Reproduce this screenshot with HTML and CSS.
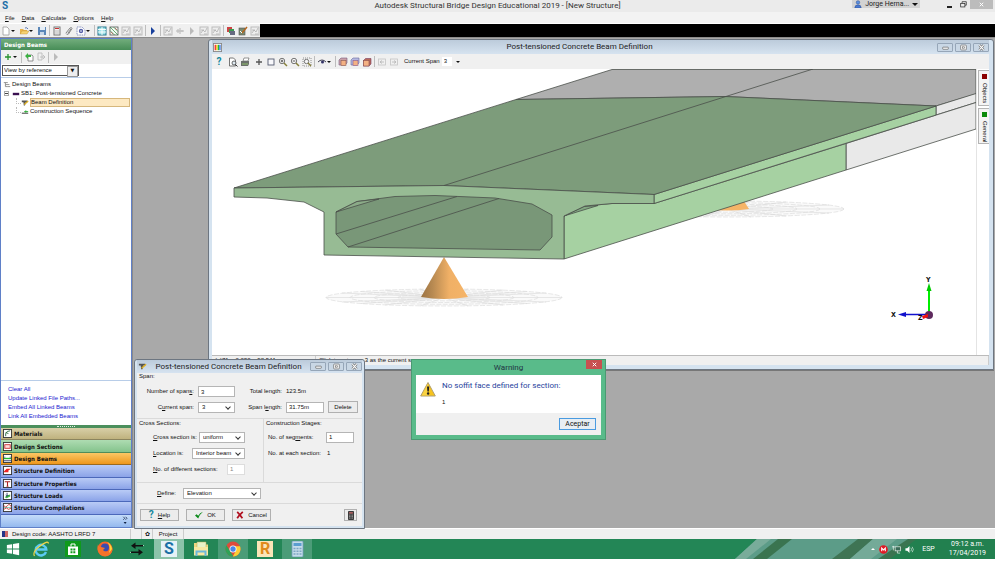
FILE: index.html
```html
<!DOCTYPE html>
<html lang="en">
<head>
<meta charset="utf-8">
<title>Autodesk Structural Bridge Design Educational 2019</title>
<link rel="stylesheet" href="styles.css">
</head>
<body>
<svg class="defs" aria-hidden="true">
  <defs>
    <linearGradient id="cone" x1="0" x2="1"><stop offset="0" stop-color="#9c7444"/><stop offset=".25" stop-color="#b88a52"/><stop offset=".6" stop-color="#f0b066"/><stop offset="1" stop-color="#f5b468"/></linearGradient>
    <symbol id="i-new" viewBox="0 0 10 10"><path d="M2 1h4l2 2v6H2z" fill="#fff" stroke="#999" stroke-width=".8"/></symbol>
    <symbol id="i-open" viewBox="0 0 10 10"><path d="M1 3h3l1 1h3v4H1z" fill="#e8b44a"/><path d="M1 8l2-3h7L8 8z" fill="#f7d372" stroke="#b58a30" stroke-width=".4"/><path d="M6 2q2-1 3 1" fill="none" stroke="#5a7ab8"/></symbol>
    <symbol id="i-save" viewBox="0 0 10 10"><rect x="1" y="1" width="8" height="8" fill="#5b87b8"/><rect x="3" y="1" width="5" height="3" fill="#e4edf6"/><rect x="3" y="6" width="4" height="3" fill="#c9d8e8"/></symbol>
    <symbol id="i-report" viewBox="0 0 10 10"><rect x="2" y="1" width="6" height="8" fill="#f3f3f3" stroke="#777"/><rect x="3" y="2" width="4" height="1" fill="#c33"/><path d="M3 5h4M3 7h4" stroke="#999" stroke-width=".6"/></symbol>
    <symbol id="i-clip" viewBox="0 0 10 10"><path d="M2 7l4-5q2-1 2 .5L4.500 8Q2.500 9 2 7.500M4 7l3-4" fill="none" stroke="#777" stroke-width=".9"/></symbol>
    <symbol id="i-gear" viewBox="0 0 10 10"><path d="M1 1h5l3 3v5H1z" fill="#fff" stroke="#8a94c0" stroke-dasharray="1.5 .8"/><circle cx="5" cy="5" r="2.200" fill="#5560a8"/><circle cx="5" cy="5" r=".8" fill="#fff"/></symbol>
    <symbol id="i-table" viewBox="0 0 10 10"><rect x="1" y="1" width="8" height="8" fill="#9fe4ea" stroke="#28798f"/><path d="M5 1v8M1 3.500h8M1 6h8" stroke="#fff" stroke-width=".9"/></symbol>
    <symbol id="i-hatch" viewBox="0 0 10 10"><rect x="1" y="1" width="8" height="8" fill="#f2faf2" stroke="#555" stroke-width=".8"/><path d="M1 1l8 8M4.500 1L9 5.500M1 4.500L5.500 9" stroke="#2c8a44" stroke-width=".7"/><path d="M6 2l2 2M2 6l2 2" stroke="#b33" stroke-width=".6"/></symbol>
    <symbol id="i-grey" viewBox="0 0 10 10"><rect x="1" y="1" width="8" height="8" fill="#eee" stroke="#bbb"/><path d="M2 7l2-3 2 2 2-4M2 4h3M5 8h3" fill="none" stroke="#b0b0b0" stroke-width=".8"/></symbol>
    <symbol id="i-bars" viewBox="0 0 10 10"><path d="M1 5h8M3 3v4M5 2v6M7 4v2" stroke="#b8b8b8" stroke-width="1"/></symbol>
    <symbol id="i-play" viewBox="0 0 10 10"><path d="M3 1l4 4-4 4z" fill="currentColor"/></symbol>
    <symbol id="i-layers" viewBox="0 0 10 10"><rect x="1" y="1" width="5" height="5" fill="#c44"/><rect x="3" y="3" width="5" height="4" fill="#3a9a50"/><rect x="4" y="5" width="5" height="4" fill="#666a80"/></symbol>
    <symbol id="i-edit" viewBox="0 0 10 10"><rect x="1" y="2" width="6" height="7" fill="#7a8a70" stroke="#555" stroke-width=".6"/><path d="M4 7l5-6" stroke="#b5651d" stroke-width="1.400"/><path d="M2 5l2 2" stroke="#fff"/></symbol>
    <symbol id="i-plus" viewBox="0 0 10 10"><path d="M5 2v6M2 5h6" stroke="currentColor" stroke-width="1.300"/></symbol>
    <symbol id="i-import" viewBox="0 0 10 10"><path d="M4 3h4l1 1v5H4z" fill="#fff" stroke="#777" stroke-width=".8"/><path d="M1 4l3-3v2h3v2H4v2z" fill="#3cb043"/></symbol>
    <symbol id="i-export" viewBox="0 0 10 10"><path d="M2 1h4v7H2zM4 5h5M7 3l2 2-2 2" fill="none" stroke="#bbb" stroke-width=".9"/></symbol>
    <symbol id="i-preview" viewBox="0 0 10 10"><path d="M1.500 1h4l2 2v6h-6z" fill="#fff" stroke="#555" stroke-width=".8"/><circle cx="6" cy="6" r="2" fill="#dfeaf2" stroke="#444" stroke-width=".8"/><path d="M7.500 7.500l2 2" stroke="#333"/></symbol>
    <symbol id="i-print" viewBox="0 0 10 10"><path d="M3 4l1-3h5L8 4z" fill="#fff" stroke="#555" stroke-width=".6"/><path d="M1 4h8v3l-1 2H1z" fill="#6b6f6b"/><path d="M2 7h6" stroke="#8fbf6a"/></symbol>
    <symbol id="i-box" viewBox="0 0 10 10"><rect x="2" y="2" width="6" height="6" fill="#f8f8fb" stroke="#555b70" stroke-width=".9"/></symbol>
    <symbol id="i-zoomin" viewBox="0 0 10 10"><circle cx="4" cy="4" r="2.700" fill="#f6f6f6" stroke="#555" stroke-width=".8"/><path d="M4 2.700v2.600M2.700 4h2.600" stroke="#333" stroke-width=".8"/><path d="M6 6l3 3" stroke="#87803a" stroke-width="1.500"/></symbol>
    <symbol id="i-zoomout" viewBox="0 0 10 10"><circle cx="4" cy="4" r="2.700" fill="#f6f6f6" stroke="#555" stroke-width=".8"/><path d="M2.700 4h2.600" stroke="#333" stroke-width=".8"/><path d="M6 6l3 3" stroke="#87803a" stroke-width="1.500"/></symbol>
    <symbol id="i-zoomfit" viewBox="0 0 10 10"><rect x="1" y="1" width="8" height="8" fill="none" stroke="#777" stroke-width=".8" stroke-dasharray="1 1"/><circle cx="4.500" cy="4.500" r="2.200" fill="#f6f6f6" stroke="#555" stroke-width=".8"/><path d="M6 6l3 3" stroke="#87803a" stroke-width="1.400"/></symbol>
    <symbol id="i-eye" viewBox="0 0 10 10"><path d="M1 5q4-4 8 0" fill="none" stroke="#445"/><circle cx="5.500" cy="5" r="1.500" fill="#336"/></symbol>
    <symbol id="i-cube" viewBox="0 0 10 10"><path d="M1 3l2-2h6v5L7 8H1z" fill="#c9a0a8" stroke="#7a5a80" stroke-width=".6"/><rect x="3" y="3.500" width="5" height="5" fill="#f4b183" stroke="#8a5a50" stroke-width=".6"/></symbol>
    <symbol id="i-cube2" viewBox="0 0 10 10"><path d="M1 3l2-2h6v5L7 8H1z" fill="#b5b8e0" stroke="#6a6aa0" stroke-width=".6"/><rect x="3" y="3.500" width="5" height="5" fill="#f4b183" stroke="#8a5a90" stroke-width=".6"/></symbol>
    <symbol id="i-cube3" viewBox="0 0 10 10"><path d="M1.500 3.500l2-2H9V7L7 9H1.500z" fill="#b86a5a" stroke="#7a3a60" stroke-width=".6"/><rect x="1.500" y="3.500" width="5.500" height="5.500" fill="#f4b183" stroke="#8a5050" stroke-width=".6"/></symbol>
    <symbol id="i-undo" viewBox="0 0 10 10"><rect x="1.500" y="2" width="7" height="6" fill="none" stroke="#c4c4c4" stroke-width=".8"/><path d="M3 5h4M5 3.500L3 5l2 1.500" fill="none" stroke="#b5b5b5" stroke-width=".8"/></symbol>
    <symbol id="i-tree" viewBox="0 0 10 10"><path d="M1 2h5M3 2v5h3M3 4.500h5M6 7h3" fill="none" stroke="#888" stroke-width="1.100"/></symbol>
    <symbol id="i-beam" viewBox="0 0 10 10"><rect x="1" y="3.500" width="8" height="3" fill="#3a1050"/></symbol>
    <symbol id="i-pencil" viewBox="0 0 10 10"><path d="M1 2h7v2H6l-1 4H3.500L3 4H1z" fill="#555"/><path d="M4 7l5-4.500" stroke="#e0b020" stroke-width="1.600"/></symbol>
    <symbol id="i-seq" viewBox="0 0 10 10"><path d="M1 6.500h8" stroke="#333" stroke-width="1.200"/><path d="M4 4.500h5M6 3v3" stroke="#2fae3a" stroke-width="1.200"/></symbol>
    <symbol id="i-user" viewBox="0 0 10 10"><circle cx="5" cy="3" r="2.200" fill="#5b90e0" stroke="#2a4a90" stroke-width=".6"/><path d="M1 10q0-4 4-4t4 4z" fill="#4a7ad0" stroke="#2a4a90" stroke-width=".6"/></symbol>
    <symbol id="i-restore" viewBox="0 0 10 10"><path d="M3 3V1h6v5H7" fill="none" stroke="#222"/><rect x="1" y="3.500" width="6" height="5" fill="none" stroke="#222"/></symbol>
    <symbol id="i-x" viewBox="0 0 10 10"><path d="M2.500 2.500l5 5M7.500 2.500l-5 5" stroke="currentColor" stroke-width="1.400"/></symbol>
    <symbol id="w-min" viewBox="0 0 10 10"><rect x="1" y="4.500" width="8" height="3" rx=".6" fill="#fff" stroke="#666"/></symbol>
    <symbol id="w-max" viewBox="0 0 10 10"><rect x="1" y="1.500" width="8" height="7" rx="1" fill="#fff" stroke="#666"/><rect x="3.500" y="4" width="3" height="2" fill="none" stroke="#666" stroke-width=".9"/></symbol>
    <symbol id="w-close" viewBox="0 0 10 10"><path d="M2 1.500l6 7M8 1.500l-6 7" stroke="#666" stroke-width="3.400"/><path d="M2 1.500l6 7M8 1.500l-6 7" stroke="#fff" stroke-width="1.600"/></symbol>
    <symbol id="i-calc" viewBox="0 0 10 12"><rect x="1" y="0" width="8" height="12" rx="1" fill="#3c3c3c"/><rect x="2.500" y="1.500" width="5" height="2" fill="#b66"/><path d="M2.500 5.500h5M2.500 7.500h5M2.500 9.500h5" stroke="#ddd" stroke-dasharray="1 1"/></symbol>
    <symbol id="i-check" viewBox="0 0 10 10"><path d="M0 5.500l2-1.500 2 2q2-4 6-5-4 3-6 8.500z" fill="#0b8a1a"/></symbol>
    <symbol id="i-cross" viewBox="0 0 10 10"><path d="M1.500 1q3 3 6.500 8M8.500 1Q4 5 1.500 9" fill="none" stroke="#b01020" stroke-width="2.200"/></symbol>
    <symbol id="i-warn" viewBox="0 0 16 16"><path d="M8 1.500L15.300 15H.7z" fill="#f7c31c" stroke="#b0a070" stroke-linejoin="round"/><path d="M8 2.500V14.500H1.700z" fill="#fbdd5a" opacity=".6"/><path d="M7 5.500h2.200l-.4 5H7.400z" fill="#222"/><circle cx="8.100" cy="12.500" r="1.200" fill="#222"/></symbol>
  </defs>
</svg>

<header class="titlebar">
  <span class="brand">S</span>
  <h1>Autodesk Structural Bridge Design Educational 2019 - [New Structure]</h1>
  <button class="user"><svg><use href="#i-user"/></svg>Jorge Herna...<i class="tri"></i></button>
  <div class="syswin">
    <button aria-label="Minimize"><i class="dash"></i></button>
    <button aria-label="Restore"><svg><use href="#i-restore"/></svg></button>
    <button class="sysclose" aria-label="Close"><svg><use href="#i-x"/></svg></button>
  </div>
</header>
<nav class="menubar">
  <button><u>F</u>ile</button><button><u>D</u>ata</button><button><u>C</u>alculate</button><button><u>O</u>ptions</button><button><u>H</u>elp</button>
</nav>
<div class="toolrow">
  <div class="toolbar main-tools">
    <button aria-label="New"><svg><use href="#i-new"/></svg></button><i class="caret"></i>
    <button aria-label="Open"><svg><use href="#i-open"/></svg></button><i class="caret"></i>
    <button aria-label="Save"><svg><use href="#i-save"/></svg></button><i class="sep"></i>
    <button aria-label="Report"><svg><use href="#i-report"/></svg></button>
    <button aria-label="Attach"><svg><use href="#i-clip"/></svg></button>
    <button aria-label="Settings"><svg><use href="#i-gear"/></svg></button><i class="caret"></i><i class="sep"></i>
    <button aria-label="Table"><svg><use href="#i-table"/></svg></button>
    <button aria-label="Hatch"><svg><use href="#i-hatch"/></svg></button>
    <button aria-label="Loads"><svg><use href="#i-grey"/></svg></button>
    <button aria-label="Diagram"><svg><use href="#i-grey"/></svg></button><i class="sep"></i>
    <button class="navy" aria-label="Run"><svg><use href="#i-play"/></svg></button><i class="sep"></i>
    <button aria-label="Wave"><svg><use href="#i-grey"/></svg></button>
    <button aria-label="Bars"><svg><use href="#i-bars"/></svg></button>
    <button class="dim" aria-label="Next"><svg><use href="#i-play"/></svg></button>
    <button aria-label="Chart"><svg><use href="#i-grey"/></svg></button>
    <button aria-label="Results"><svg><use href="#i-grey"/></svg></button><i class="sep"></i>
    <button aria-label="Layers"><svg><use href="#i-layers"/></svg></button>
    <button aria-label="Edit"><svg><use href="#i-edit"/></svg></button>
    <button aria-label="Copy"><svg><use href="#i-grey"/></svg></button>
  </div>
</div>

<div class="workspace">
  <aside class="side">
    <h2>Design Beams</h2>
    <div class="toolbar side-tools">
      <button class="green" aria-label="Add"><svg><use href="#i-plus"/></svg></button><i class="caret"></i><i class="sep"></i>
      <button aria-label="Import"><svg><use href="#i-import"/></svg></button>
      <button aria-label="Export"><svg><use href="#i-export"/></svg></button><i class="sep"></i>
      <button class="dim" aria-label="Run"><svg><use href="#i-play"/></svg></button>
    </div>
    <div class="viewby">
      <span class="pick classic"><select aria-label="View"><option>View by reference</option></select></span>
    </div>
    <ul class="tree">
      <li><svg><use href="#i-tree"/></svg><span>Design Beams</span></li>
      <li><i class="node"></i><svg><use href="#i-beam"/></svg><span>SB1: Post-tensioned Concrete</span></li>
      <li class="leaf"><svg><use href="#i-pencil"/></svg><span class="sel">Beam Definition</span></li>
      <li class="leaf last"><svg><use href="#i-seq"/></svg><span>Construction Sequence</span></li>
    </ul>
    <div class="links">
      <a href="#">Clear All</a><a href="#">Update Linked File Paths...</a><a href="#">Embed All Linked Beams</a><a href="#">Link All Embedded Beams</a>
    </div>
    <div class="grip"><i></i></div>
    <nav class="stack">
      <button class="tan"><svg viewBox="0 0 10 10"><rect x=".5" y=".5" width="9" height="9" fill="#fff" stroke="#333"/><path d="M3 8V5q1-3 5-3M3 4l3 1" fill="none" stroke="#2a6a3a"/></svg>Materials</button>
      <button class="mint"><svg viewBox="0 0 10 10"><rect x=".5" y=".5" width="9" height="9" fill="#fff" stroke="#333"/><rect x="2" y="3" width="6" height="4" fill="#fdd" stroke="#c33"/></svg>Design Sections</button>
      <button class="amber"><svg viewBox="0 0 10 10"><rect x=".5" y=".5" width="9" height="9" fill="#fff" stroke="#333"/><path d="M1 5h8" stroke="#2b3" stroke-width="1.500"/><path d="M1 7.500h8M2 3v1M8 3v1" stroke="#236"/></svg>Design Beams</button>
      <button><svg viewBox="0 0 10 10"><rect x=".5" y=".5" width="9" height="9" fill="#fff" stroke="#333"/><path d="M1 6l3-3h5L6 5v2H1z" fill="#e22"/></svg>Structure Definition</button>
      <button><svg viewBox="0 0 10 10"><rect x=".5" y=".5" width="9" height="9" fill="#fff" stroke="#333"/><path d="M2 3h6M5 3v5M4 8h2" stroke="#a22" stroke-width="1.200"/></svg>Structure Properties</button>
      <button><svg viewBox="0 0 10 10"><rect x=".5" y=".5" width="9" height="9" fill="#fff" stroke="#333"/><path d="M2 7l2-2 4-1v2L4 8z" fill="#4b4"/><path d="M4.500 2v4M3 4.500L4.500 6 6 4.500" fill="none" stroke="#236" stroke-width=".9"/></svg>Structure Loads</button>
      <button><svg viewBox="0 0 10 10"><rect x=".5" y=".5" width="9" height="9" fill="#fff" stroke="#333"/><path d="M1 3q2 3 4 0t4 1M1 7q3-3 5 0l3-1" fill="none" stroke="#c33"/><path d="M1 5h8" stroke="#3a8" stroke-width=".6"/></svg>Structure Compilations</button>
      <button class="more" aria-label="More"><svg viewBox="0 0 10 12"><path d="M2 1l2 2-2 2M5 1l2 2-2 2" fill="none" stroke="#124"/><path d="M2.500 8h4L4.500 10.500z" fill="#124"/></svg></button>
    </nav>
  </aside>

  <main class="desk">
    <section class="win view">
      <div class="wtitle">
        <svg class="wicon" viewBox="0 0 10 10"><rect x=".5" y=".5" width="9" height="9" fill="#fff" stroke="#888"/><path d="M2.500 2v6" stroke="#e22" stroke-width="1.400"/><path d="M4.300 2v6" stroke="#fb0" stroke-width="1.400"/><path d="M6 2v6" stroke="#2b3" stroke-width="1.400"/><path d="M7.700 2v6" stroke="#26d" stroke-width="1.400"/></svg>
        <h2>Post-tensioned Concrete Beam Definition</h2>
        <div class="wbtns"><button aria-label="Minimize"><svg><use href="#w-min"/></svg></button><button aria-label="Maximize"><svg><use href="#w-max"/></svg></button><button aria-label="Close"><svg><use href="#w-close"/></svg></button></div>
      </div>
      <div class="toolbar view-tools">
        <button class="qm" aria-label="Help">?</button><i class="space"></i>
        <button aria-label="Preview"><svg><use href="#i-preview"/></svg></button>
        <button aria-label="Print"><svg><use href="#i-print"/></svg></button><i class="space"></i>
        <button class="slate" aria-label="Pan"><svg><use href="#i-plus"/></svg></button>
        <button aria-label="Window"><svg><use href="#i-box"/></svg></button>
        <button aria-label="Zoom in"><svg><use href="#i-zoomin"/></svg></button>
        <button aria-label="Zoom out"><svg><use href="#i-zoomout"/></svg></button>
        <button aria-label="Zoom fit"><svg><use href="#i-zoomfit"/></svg></button><i class="sep"></i>
        <button aria-label="Visibility"><svg><use href="#i-eye"/></svg></button><i class="caret"></i><i class="sep"></i>
        <button aria-label="Front"><svg><use href="#i-cube"/></svg></button>
        <button aria-label="Side"><svg><use href="#i-cube2"/></svg></button>
        <button aria-label="Iso"><svg><use href="#i-cube3"/></svg></button><i class="sep"></i>
        <button aria-label="Undo"><svg><use href="#i-undo"/></svg></button>
        <button aria-label="Redo"><svg class="flip"><use href="#i-undo"/></svg></button>
        <label class="span" for="cs">Current Span</label>
        <span class="pick flat"><select id="cs"><option>3</option></select></span>
      </div>
      <div class="viewbody">
        <svg class="scene" viewBox="212 69 764 286" preserveAspectRatio="xMidYMid meet" role="img" aria-label="3D view of the beam">
          <g fill="none" stroke="#d8d8d8" stroke-width=".6">
            <g stroke-dasharray="5 1.500"><ellipse cx="444" cy="297.500" rx="118" ry="8.500" fill="#fafafa"/><ellipse cx="444" cy="297.500" rx="94" ry="6.800"/><ellipse cx="444" cy="297.500" rx="70" ry="5"/><ellipse cx="444" cy="297.500" rx="46" ry="3.300"/></g>
            <path d="M326 297.500h236M342 293l204 9M342 302l204-9M385 290l118 15M385 305l118-15M420 289l48 17M420 306l48-17M361 291.500l166 12M361 303.500l166-12"/>
            <g stroke-dasharray="5 1.500"><ellipse cx="727" cy="209" rx="117" ry="8" fill="#fafafa"/><ellipse cx="727" cy="209" rx="93" ry="6.300"/><ellipse cx="727" cy="209" rx="70" ry="4.800"/><ellipse cx="727" cy="209" rx="46" ry="3.200"/></g>
            <path d="M610 209h234M625 205l204 8M625 213l204-8M668 202l118 14M668 216l118-14M703 201l48 16M703 217l48-16"/>
          </g>
          <path d="M727 175L749 209Q727 212 705 209z" fill="#f5b468"/>
          <path d="M444 257L468 297Q444 301 421 297z" fill="url(#cone)"/>
          <g stroke="#4a4f4a" stroke-width=".8" stroke-linejoin="round">
            <path d="M516 99.500L612 69.500H976V94L936 106 725 96.500z" fill="#afafaf"/>
            <path d="M936 106L976 93.500V102.500L936 115z" fill="#e9e9e9"/>
            <path d="M846 143.500L976 102.500V129L846 170z" fill="#e9e9e9"/>
            <path d="M564 216L585 206 612 203.500H654L846 143.500V170L564 259z" fill="#a6d1a2"/>
            <path d="M564 216L584 206.500 598 205.500z" fill="#82a882"/>
            <path d="M654 194.500L936 106V115L654 203.500z" fill="#a6d1a2"/>
            <path d="M234 188L516 99.500 725 96.500 936 106 654 194.500 444 185.500z" fill="#7d9c7b"/>
            <path d="M234 188L444 185.500 654 194.500V203.500L612 203.500 585 206 564 216V259L324 255V212L304 202 267 198 234 197z" fill="#97bb94"/>
            <path d="M336 212L357 201.500 395 196.500 435 195.500 495 198 532 204 552 215V237L540 250 348 247 336 234z" fill="#799778"/>
            <path d="M336 212L357 201.500 379 199z" fill="#8bab88"/>
            <path d="M444 185.500L813 69M336 234L457 196.500M348 247L499 198.500" fill="none"/>
          </g>
          <path d="M929 315V290" stroke="#0e0" stroke-width="2"/><path d="M926.500 291l2.500-8 2.500 8z" fill="#0c0"/>
          <path d="M929 314.500H905" stroke="#11c" stroke-width="1.500"/><path d="M906 312l-8 2.500 8 2.500z" fill="#11c"/>
          <circle cx="929" cy="315" r="4" fill="#5e2a5e"/>
          <g class="axis"><text x="891" y="317">X</text><text x="926" y="282">Y</text><text x="918" y="320">Z</text></g>
          <path d="M922 316l6-2v3l-5 2z" fill="#e11"/>
        </svg>
        <div class="vtabs"><button><i class="red"></i>Objects</button><button><i class="grn"></i>General</button></div>
      </div>
      <div class="vstatus"><span>(x)71: +0.080, +92.541</span><span>Click to set span 3 as the current span</span></div>
    </section>

    <section class="win dlg">
      <div class="wtitle">
        <svg class="wicon"><use href="#i-pencil"/></svg>
        <h2>Post-tensioned Concrete Beam Definition</h2>
        <div class="wbtns"><button aria-label="Minimize"><svg><use href="#w-min"/></svg></button><button aria-label="Maximize"><svg><use href="#w-max"/></svg></button><button aria-label="Close"><svg><use href="#w-close"/></svg></button></div>
      </div>
      <form class="form">
        <div class="group g-span">
          <h3>Span:</h3>
          <div class="spangrid">
            <label for="ns">Number of span<u>s</u>:</label><input id="ns" value="3">
            <span class="lab">Total length:</span><span>123.5m</span><span></span>
            <label for="cu">C<u>u</u>rrent span:</label><span class="pick"><select id="cu"><option>3</option></select></span>
            <label for="sl">Span l<u>e</u>ngth:</label><input id="sl" value="31.75m"><button type="button">Delete</button>
          </div>
        </div>
        <div class="cols">
          <div class="group g-cross">
            <h3>Cross Sections:</h3>
            <div class="line"><label for="c1"><u>C</u>ross section is:</label><span class="pick w46"><select id="c1"><option>uniform</option></select></span></div>
            <div class="line"><label for="c2"><u>L</u>ocation is:</label><span class="pick w53"><select id="c2"><option>Interior beam</option></select></span></div>
            <div class="line"><label for="c3"><u>N</u>o. of different sections:</label><input id="c3" class="w18" value="1" disabled></div>
          </div>
          <div class="group g-stage">
            <h3>Construction Stages:</h3>
            <div class="line"><label for="s1">No. of seg<u>m</u>ents:</label><input id="s1" class="w28" value="1"></div>
            <div class="line"><span>No. at each section:</span><span class="val">1</span></div>
          </div>
        </div>
        <div class="group g-define"><label for="df"><u>D</u>efine:</label><span class="pick w78"><select id="df"><option>Elevation</option></select></span></div>
        <div class="actions">
          <button type="button"><b class="qm">?</b><span><u>H</u>elp</span></button>
          <button type="button"><svg><use href="#i-check"/></svg>OK</button>
          <button type="button"><svg><use href="#i-cross"/></svg>Cancel</button>
          <button type="button" class="calc" aria-label="Calculator"><svg><use href="#i-calc"/></svg></button>
        </div>
      </form>
    </section>

    <section class="warn" role="alertdialog" aria-label="Warning">
      <div class="warnhead"><h2>Warning</h2><button aria-label="Close"><svg><use href="#i-x"/></svg></button></div>
      <div class="warnbody"><svg><use href="#i-warn"/></svg><div><p class="msg">No soffit face defined for section:</p><p>1</p></div></div>
      <div class="warnfoot"><button>Aceptar</button></div>
    </section>
  </main>
</div>

<footer class="status">
  <span class="code"><i class="flag"></i>Design code: AASHTO LRFD 7</span><span class="cell"></span><span class="cell">✿</span><span class="cell proj">Project</span>
</footer>
<div class="taskbar">
  <button aria-label="Start"><svg viewBox="0 0 16 16"><path d="M1 3.500l6-1v5H1zM8 2.300L15 1v6.500H8zM1 8.500h6v5l-6-1zM8 8.500h7V15l-7-1.300z" fill="#fff"/></svg></button>
  <button aria-label="Internet Explorer"><svg viewBox="0 0 16 16"><path d="M13 11A5.300 5.300 0 1 1 13.300 8.500H4" fill="none" stroke="#5ccbf5" stroke-width="2.400"/><path d="M1.500 15Q-1 11 7 5T15.500 2.500" fill="none" stroke="#f5d648" stroke-width="1.200"/></svg></button>
  <button aria-label="Store"><svg viewBox="0 0 16 16"><rect width="16" height="16" fill="#0f9a1c"/><path d="M3 5.500h10V14H3z" fill="#fff"/><path d="M6 5.500V3h4v2.500" fill="none" stroke="#fff"/><path d="M5.500 7.500h2v2h-2zM8.300 7.500h2v2h-2zM5.500 10.200h2v2h-2zM8.300 10.200h2v2h-2z" fill="#0f9a1c"/></svg></button>
  <button aria-label="Firefox"><svg viewBox="0 0 16 16"><circle cx="8" cy="8" r="7.500" fill="#f5642a"/><circle cx="8" cy="6.500" r="4" fill="#3b4bb0"/><path d="M1 3q0 3 3 3l4 1-2 2q2 3 6 1 3-3 1-7 3 3 2.500 6A7.500 7.500 0 0 1 .7 9q-.6-3 .3-6z" fill="#f5742a"/><path d="M10.500 1q4 3 4.500 7l-3 4q2-6-1.500-11z" fill="#ffd83a"/></svg></button>
  <button aria-label="Switch"><svg viewBox="0 0 16 16"><path d="M9 4.500h6M1 11.500h6" stroke="#a9cfbb" stroke-width="1"/><path d="M14 4H6.500V1.500L2 4.700l4.500 3.200V5.500H14zM2 10.500h7.500V8l4.500 3.200-4.500 3.200V12H2z" fill="#111"/></svg></button>
  <button class="on" aria-label="Structural Bridge Design"><span class="tile s">S</span></button>
  <button aria-label="Explorer"><svg viewBox="0 0 16 16"><path d="M1 2h5l1 1.500h8V14H1z" fill="#efd680"/><path d="M4 1h9v7H4z" fill="#e8f2c8" stroke="#b8a850" stroke-width=".5"/><path d="M1 6h14v8.500H1z" fill="#f8e8a2"/><path d="M3.500 15v-4.500h9V15" fill="none" stroke="#6db8dc" stroke-width="2"/></svg></button>
  <button class="open" aria-label="Chrome"><svg viewBox="0 0 16 16"><circle cx="8" cy="8" r="7.500" fill="#de4b3b"/><path d="M1.500 4.200L6 11.500 8.500 15.500A7.500 7.500 0 0 1 1.500 4.200z" fill="#2fa257"/><path d="M15 5.200H8L11 9.500 7.800 15.500A7.500 7.500 0 0 0 15 5.200z" fill="#fbce34"/><circle cx="8" cy="8" r="3.500" fill="#fff"/><circle cx="8" cy="8" r="2.700" fill="#4a86e8"/></svg></button>
  <button aria-label="Robot"><span class="tile r">R</span></button>
  <button class="open" aria-label="Calculator"><svg viewBox="0 0 16 16"><rect x="3" y="0" width="11" height="16" rx="1" fill="#c6dcea" stroke="#6e9cbc" stroke-width=".8"/><rect x="4.500" y="2" width="8" height="3" fill="#5b9dd0"/><path d="M4.500 7.500h8M4.500 10.200h8M4.500 13h8" stroke="#7da5c4" stroke-width="1.500" stroke-dasharray="2 1"/></svg></button>
  <svg class="streak" viewBox="0 0 320 20" preserveAspectRatio="none" aria-hidden="true">
    <path d="M82 0H241L212 20H60z" fill="#5c9c88"/>
    <path d="M82 0h14L71 20H60z" fill="#79ac9a"/>
    <path d="M103 0h14L92 20H78z" fill="#3a7450"/>
    <path d="M183 0h15L175 20H157z" fill="#3f7454"/>
    <path d="M198 0h24L196 20h-21z" fill="#74aa98"/>
    <path d="M233 0h9L215 20h-12z" fill="#3a7450"/>
    <path d="M242 0h78v20H215z" fill="#22804f"/>
  </svg>
  <div class="tray">
    <i class="up"></i>
    <svg viewBox="0 0 10 10"><circle cx="5" cy="5" r="4.800" fill="#e01a24"/><path d="M3 7V3.500l2 2 2-2V7" fill="none" stroke="#fff" stroke-width="1.200"/></svg>
    <svg viewBox="0 0 10 10"><rect x="3.500" y="2" width="6" height="4.500" fill="#3a6b58" stroke="#e8f2ee" stroke-width=".8"/><path d="M1.500 1v5M0 2h3M6 6.500v2.500h3" fill="none" stroke="#e8f2ee" stroke-width=".8"/></svg>
    <svg viewBox="0 0 10 10"><path d="M.5 3.500h2L5 1v8L2.500 6.500h-2z" fill="#fff"/><path d="M6.500 3q1.500 2 0 4M8 2q2.500 3 0 6" fill="none" stroke="#d5e8df" stroke-width=".8"/></svg>
    <span class="lang">ESP</span>
    <time>09:12 a.m.<br>17/04/2019</time>
  </div>
</div>
</body>
</html>
```
FILE: styles.css
```css
* { box-sizing: border-box; margin: 0; padding: 0; }
:root { --ui: "Liberation Sans", sans-serif; --bold: "DejaVu Sans Condensed", "DejaVu Sans", sans-serif; --segoe: Roboto, "Open Sans", sans-serif; }
body { min-height: 100vh; display: flex; flex-direction: column; padding: 0 4px 17px 0; background: #fff; color: #111; font: 6px/9px var(--ui); }
button, input, select { font: inherit; color: inherit; border: 0; background: none; border-radius: 0; min-width: 0; }
button { display: inline-flex; align-items: center; justify-content: center; }
svg { display: block; flex: none; width: 10px; height: 10px; }
h1, h2, h3 { font: inherit; }
.defs { position: absolute; width: 0; height: 0; }

.titlebar { display: grid; grid-template-columns: 1fr auto 1fr; align-items: start; height: 12px; background: #ebebeb; position: relative; }
.titlebar h1 { font: 8px/12px var(--segoe); color: #333; }
.brand { padding-left: 2px; font: bold 10px/12px var(--segoe); color: #1b6ea8; }
.user { position: absolute; right: 75px; top: 0; height: 8px; padding: 0 2px; gap: 3px; background: #d3d3d3; font: 7px/8px var(--segoe); color: #222; }
.user svg { width: 8px; height: 8px; }
.tri { border: 3px solid transparent; border-top-color: #111; border-bottom: 0; }
.syswin { display: flex; justify-content: flex-end; padding-right: 2px; }
.syswin button { width: 14px; height: 9px; }
.syswin svg { width: 7px; height: 7px; }
.syswin .sysclose { width: 23px; background: #bcbcbc; color: #fff; }
.dash { width: 5px; height: 2px; margin-top: 4px; background: #222; }

.menubar { display: flex; gap: 7px; height: 12px; padding-left: 5px; background: #f3f3f3; line-height: 12px; border-bottom: 1px solid #fff; }
.toolrow { display: flex; height: 13px; background: #000; }
.toolbar { display: flex; align-items: center; gap: 2px; background: #f0f0f0; }
.toolbar button { flex: none; width: 10px; height: 10px; }
.main-tools { width: 260px; padding-left: 1px; overflow: hidden; }
.caret { flex: none; width: 4px; margin: 0 2px 0 -2px; border: 2px solid transparent; border-top-color: #111; border-bottom: 0; }
.sep { flex: none; width: 1px; height: 11px; background: #bdbdbd; }
.space { flex: none; width: 0; }
.navy { color: #173f9b; } .dim { color: #bbb; } .green { color: #25912d; } .slate { color: #555; }

.workspace { flex: 1; display: flex; border-top: 1px solid #8c8c8c; background: #a9a9a9; min-height: 0; }
.side { flex: none; width: 132px; display: flex; flex-direction: column; border: 1px solid #5f80c8; background: #fff; }
.side > h2 { padding-left: 3px; font: bold 6px/11px var(--bold); color: #fff; background: linear-gradient(#72ad7c, #478d57); }
.side-tools { height: 14px; padding-left: 2px; }
.viewby { padding: 1px; border-bottom: 1px solid #b8cde8; }
.pick { display: inline-flex; position: relative; background: #fff; border: 1px solid #b5b5b5; }
.pick select { appearance: none; width: 100%; height: 9px; padding-left: 3px; line-height: 9px; }
.pick::after { content: ""; position: absolute; right: 4px; top: 2px; width: 3px; height: 3px; border: solid #333; border-width: 0 1px 1px 0; transform: rotate(45deg); pointer-events: none; }
.classic { width: 77px; border-color: #555; }
.classic select { padding-left: 1px; }
.classic::after { content: "▼"; right: 0; top: 0; width: 9px; height: 9px; border: 1px solid #999; background: #eee; font: 5px/7px "DejaVu Sans", sans-serif; text-align: center; transform: none; }
.tree { flex: 1; list-style: none; padding: 2px 1px 0 2px; }
.tree li { display: flex; align-items: center; height: 9px; gap: 1px; white-space: nowrap; }
.tree svg { width: 8px; height: 8px; }
.node { width: 5px; height: 5px; margin: 0 2px 0 1px; border: 1px solid #aaa; background: linear-gradient(#444, #444) center / 3px 1px no-repeat #fff; }
.leaf { padding-left: 18px; position: relative; }
.leaf::before { content: ""; position: absolute; left: 13px; top: 0; width: 4px; height: 5px; border: dotted #bbb; border-width: 0 0 1px 1px; }
.leaf .sel { flex: 1; background: #fde9c2; border: 1px solid #d6b77c; line-height: 7px; }
.links { display: flex; flex-direction: column; padding: 4px 0 4px 7px; border-top: 1px solid #b8cde8; }
.links a { color: #1a1ad0; text-decoration: none; line-height: 9px; }
.grip { height: 3px; background: #4b8f5c; display: flex; justify-content: center; align-items: center; }
.grip i { width: 18px; border-top: 1px dotted #dfeee2; }
.stack { display: grid; grid-template-rows: repeat(8, 1fr); height: 99px; }
.stack button { justify-content: flex-start; gap: 2px; padding-left: 2px; border-bottom: 1px solid #4b68ba; background: linear-gradient(#b9cbf6, #8ba3e8); font: bold 6px/9px var(--bold); }
.stack svg { width: 9px; height: 9px; }
.stack .tan { background: linear-gradient(#d8cfa8, #bfb27e); border-color: #8b845e; }
.stack .mint { background: linear-gradient(#aedcb2, #84c38c); border-color: #518c5a; }
.stack .amber { background: linear-gradient(#fbc765, #ee971c); border-color: #9a6a20; }
.stack .more { justify-content: flex-end; padding-right: 1px; border: 0; background: linear-gradient(#c5dcfa, #94b9ee); }

.desk { flex: 1; position: relative; min-width: 0; border-left: 1px solid #8a8a8a; }
.win { position: absolute; display: flex; flex-direction: column; border: 1px solid #6d7681; border-radius: 3px 3px 0 0; background: #d5e3f0; }
.view { left: 75px; right: 1px; top: 1px; height: 331px; padding: 0 4px 4px 3px; box-shadow: 0 1px 0 #777; }
.dlg { left: 1px; top: 321px; width: 231px; padding: 0 2px 2px; z-index: 1; }
.wtitle { display: grid; grid-template-columns: auto 1fr auto; align-items: center; background: linear-gradient(#bccbdb, #d6e3f0); height: 14px; }
.dlg .wtitle { height: 13px; }
.wtitle h2 { font: 8px/14px var(--segoe); color: #222; white-space: nowrap; text-align: center; }
.dlg h2 { line-height: 13px; }
.wicon { width: 9px; height: 9px; margin-left: 1px; }
.wbtns { display: flex; justify-content: flex-end; gap: 2px; }
.wbtns button { width: 16px; height: 9px; border: 1px solid #96a6b8; background: #c9d7e5; border-radius: 1px; }
.wbtns svg { width: 7px; height: 7px; }
.view-tools { height: 15px; padding-left: 2px; }
.qm { color: #12879c; font: bold 10px/10px var(--segoe); }
.flip { transform: scaleX(-1); }
.span { margin-left: 3px; white-space: nowrap; }
.flat { border: 0; width: 20px; background: linear-gradient(90deg, #fff 10px, #f0f0f0 10px); }
.flat select { padding-left: 2px; }
.flat::after { right: 2px; top: 4px; width: 0; height: 0; border: 2px solid transparent; border-top-color: #111; border-bottom: 0; transform: none; }
.viewbody { flex: 1; display: flex; min-height: 0; background: #fff; }
.scene { flex: 1; width: auto; min-width: 0; height: 100%; }
.axis { font: bold 7px var(--bold); fill: #111; }
.vtabs { flex: none; width: 13px; padding: 1px 0 0 1px; display: flex; flex-direction: column; gap: 2px; border-left: 1px solid #e4e4e4; }
.vtabs button { writing-mode: vertical-rl; height: 36px; width: 11px; justify-content: flex-start; gap: 4px; padding-top: 3px; border: 1px solid #b5b5b5; border-right: 0; background: #f4f4f4; }
.vtabs i { width: 5px; height: 5px; }
.red { background: #8b0000; } .grn { background: #0a8a0a; }
.vstatus { display: grid; grid-template-columns: 104px 1fr; height: 10px; background: #f0f0f0; border-top: 1px solid #bbb; line-height: 9px; }
.vstatus span { padding-left: 3px; border-right: 1px solid #ccc; white-space: nowrap; }

.form { background: #f0f0f0; }
.form input { height: 11px; padding-left: 2px; background: #fff; border: 1px solid #b5b5b5; }
.form input:disabled { color: #888; border-color: #ddd; }
.form button { height: 12px; border: 1px solid #b0b0b0; background: #ececec; }
.form h3 { height: 7px; line-height: 7px; }
.group { padding-left: 2px; border-bottom: 1px solid #dadada; white-space: nowrap; }
.g-span { padding-bottom: 5px; }
.spangrid { display: grid; grid-template-columns: 55px 37px 43px 38px 30px; column-gap: 4px; row-gap: 4px; align-items: center; padding-top: 6px; }
.spangrid label, .spangrid .lab { text-align: right; }
.cols { display: grid; grid-template-columns: 127px 1fr; border-bottom: 1px solid #dadada; }
.cols .group { border-bottom: 0; padding-top: 1px; padding-bottom: 7px; }
.cols .g-cross { border-right: 1px solid #dadada; }
.cols h3 { margin-bottom: 4px; }
.line { display: flex; align-items: center; justify-content: space-between; height: 12px; margin-bottom: 4px; padding: 0 18px 0 14px; }
.g-stage .line { padding: 0 8px 0 2px; }
.g-cross .line:last-child { margin-bottom: 0; }
.w46 { width: 46px; } .w53 { width: 53px; } .w78 { width: 78px; }
.form .w18 { width: 18px; } .form .w28 { width: 28px; }
.val { width: 27px; }
.g-define { display: flex; align-items: center; gap: 7px; height: 21px; padding-left: 20px; }
.actions { display: flex; gap: 7px; padding: 5px 5px 5px 3px; }
.actions button { width: 39px; gap: 4px; }
.actions svg { width: 8px; height: 8px; }
.actions .calc { width: 13px; margin-left: auto; }
.actions .calc svg { height: 9px; }

.warn { position: absolute; left: 278px; top: 321px; width: 195px; padding: 0 4px 4px; background: #59bb8a; border: 1px solid #4a9a72; z-index: 2; }
.warnhead { position: relative; height: 15px; }
.warnhead h2 { text-align: center; font: 8px/15px var(--segoe); color: #234; }
.warnhead button { position: absolute; right: -1px; top: 0; width: 16px; height: 9px; background: #c75050; color: #fff; }
.warnhead svg { width: 7px; height: 7px; }
.warnbody { display: flex; gap: 6px; padding: 5px 5px 6px 4px; background: #fff; }
.warnbody svg { width: 16px; height: 16px; margin-top: 1px; }
.warnbody .msg { font: 8px/12px var(--segoe); color: #1f439c; margin-bottom: 6px; }
.warnbody p { line-height: 9px; }
.warnfoot { display: flex; justify-content: flex-end; padding: 5px; background: #f0f0f0; }
.warnfoot button { width: 37px; height: 12px; border: 1px solid #4a9be0; background: #e8eef4; font: 7px/10px var(--segoe); }

.status { display: flex; height: 11px; background: #f0f0f0; border-top: 1px solid #fff; line-height: 10px; }
.code { width: 131px; display: flex; align-items: center; gap: 4px; padding-left: 2px; border-right: 1px solid #ccc; }
.flag { width: 6px; height: 6px; background: linear-gradient(90deg, #238 3px, #c66 3px); }
.cell { width: 11px; text-align: center; border-right: 1px solid #ccc; }
.proj { width: 31px; }
.taskbar { position: relative; display: flex; height: 20px; background: #238656; overflow: hidden; }
.taskbar button { width: 30px; margin-right: 2px; height: 20px; }
.taskbar > button:first-child { width: 26px; margin-right: 0; }
.taskbar button svg { width: 16px; height: 16px; }
.taskbar > button:first-child svg { width: 14px; height: 14px; }
.taskbar .on { background: #8cc3aa; }
.taskbar .open { background: #4b9c78; }
.tile { width: 16px; height: 16px; font: bold 16px/16px var(--segoe); text-align: center; }
.s { background: #e6f1f6; color: #1b6fa6; }
.r { background: #fbe5b8; color: #e08a1c; }
.streak { margin-left: auto; width: 320px; height: 20px; }
.tray { position: absolute; right: 9px; top: 0; height: 20px; display: flex; align-items: center; gap: 4px; color: #fff; font: 7px/9px var(--segoe); }
.tray svg { width: 9px; height: 9px; }
.up { border: 2px solid transparent; border-bottom-color: #fff; border-top: 0; }
.lang { margin: 0 10px 0 4px; }
.tray time { text-align: center; font-size: 7px; }
```
